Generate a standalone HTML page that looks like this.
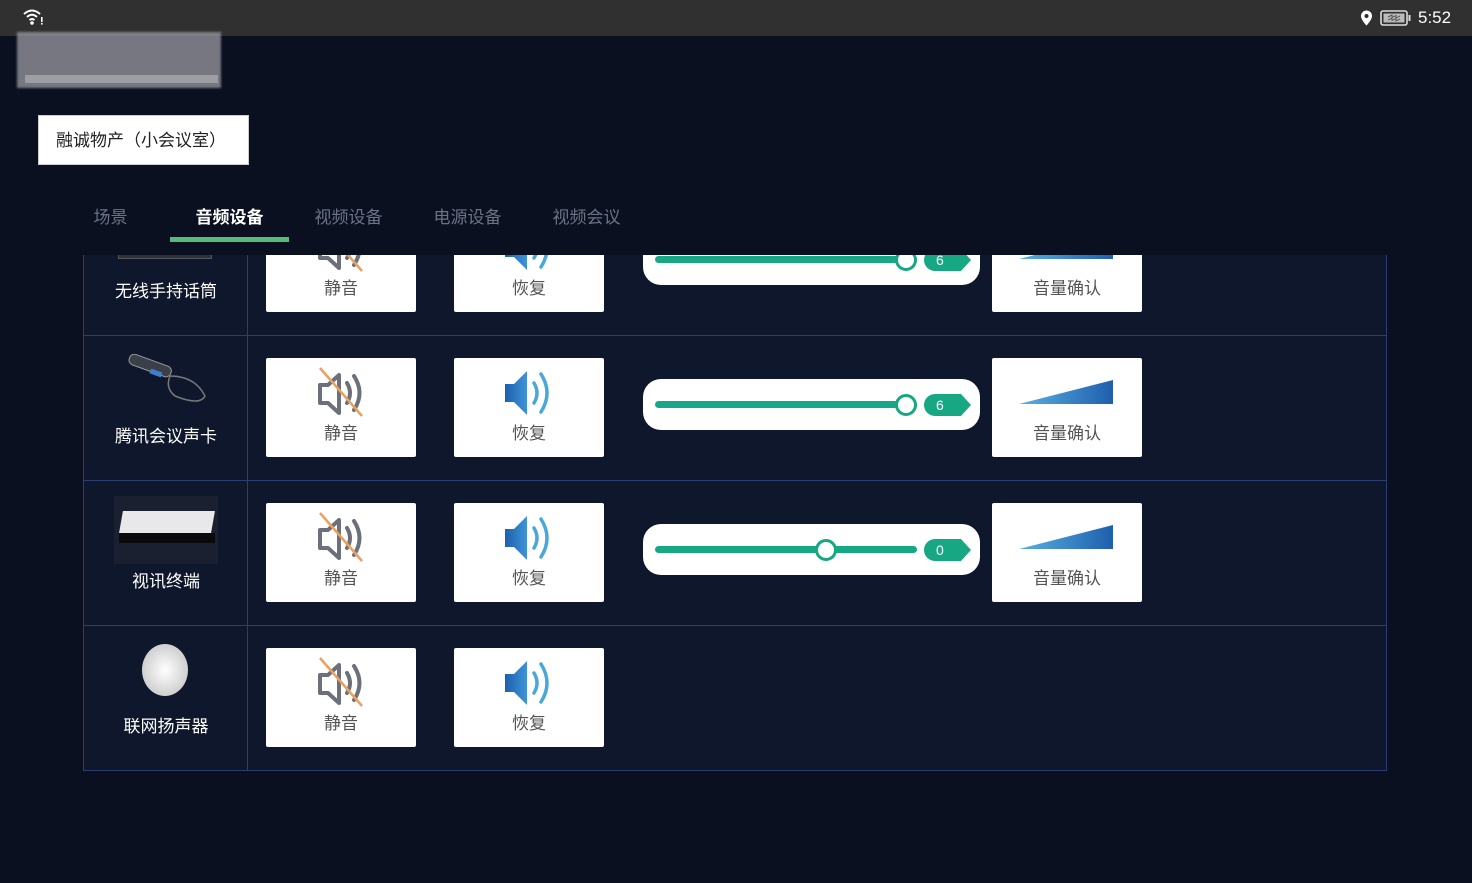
<!DOCTYPE html>
<html><head><meta charset="utf-8"><style>
*{margin:0;padding:0;box-sizing:border-box}
body{width:1472px;height:883px;overflow:hidden;background:#0a1020;font-family:"Liberation Sans","Noto Sans CJK SC",sans-serif;position:relative}
.abs{position:absolute}
#status{left:0;top:0;width:1472px;height:36px;background:#303030}
#clip{left:0;top:255px;width:1472px;height:628px;overflow:hidden}
#table{left:83px;top:-65px;width:1304px;height:581px;background:#0e172b;border:1px solid #2c3d72}
.row{position:absolute;left:0;width:1302px;height:145px;border-bottom:1px solid #2c3d72}
.name{position:absolute;left:0;top:0;width:164px;height:144px;border-right:1px solid #2c3d72}
.name span{position:absolute;left:0;width:164px;top:86px;text-align:center;color:#fff;font-size:17px}
.btn{position:absolute;top:22px;width:150px;height:99px;background:#fff;border-radius:2px}
.btn span{position:absolute;left:0;width:150px;top:61px;text-align:center;color:#555;font-size:17px}
.slider{position:absolute;left:559px;top:43px;width:337px;height:51px;background:#fff;border-radius:18px}
.tab{position:absolute;top:203px;width:119px;text-align:center;font-size:17px;color:#6b7385}
</style></head><body>
<div id="status" class="abs">
<svg class="abs" style="left:22px;top:8px" width="22" height="18" viewBox="0 0 22 18"><path d="M2 6 Q10 -1 18 6 M5 9 Q10 4.5 15 9 M7.5 12 Q10 10 12.5 12" stroke="#fff" stroke-width="2" fill="none"/><circle cx="10" cy="15" r="1.8" fill="#fff"/><rect x="19" y="9" width="1.6" height="5" fill="#fff"/><rect x="19" y="15" width="1.6" height="1.6" fill="#fff"/></svg>
<svg class="abs" style="left:1360px;top:10px" width="13" height="16" viewBox="0 0 13 16"><path d="M6.5 0.5 A5.5 5.5 0 0 1 12 6 C12 10 6.5 15.5 6.5 15.5 C6.5 15.5 1 10 1 6 A5.5 5.5 0 0 1 6.5 0.5z" fill="#fff"/><circle cx="6.5" cy="6" r="2" fill="#303030"/></svg>
<svg class="abs" style="left:1380px;top:10px" width="32" height="16" viewBox="0 0 32 16"><rect x="1" y="1" width="26" height="14" rx="2" stroke="#ddd" stroke-width="1.6" fill="none"/><rect x="3.5" y="3.5" width="21" height="9" fill="#bbb"/><path d="M8 7 l4 -2 v2.5 l4 -2 v2.5 l4 -2 M8 10 l4 -2 v2.5 l4 -2 v2.5 l4-2" stroke="#555" stroke-width="1" fill="none"/><rect x="28.5" y="5" width="2" height="6" fill="#ddd"/></svg>
<div class="abs" style="left:1418px;top:8px;color:#fff;font-size:17px">5:52</div>
</div>
<div class="abs" style="left:17px;top:32px;width:204px;height:56px;background:#9a9aa0;opacity:.75;filter:blur(1px)"></div>
<div class="abs" style="left:25px;top:75px;width:193px;height:8px;background:#c4c4c8;opacity:.5"></div>
<div class="abs" style="left:38px;top:115px;width:211px;height:50px;background:#fff;border:1px solid #ccc"></div>
<div class="abs" style="left:56px;top:126px;font-size:17px;color:#222">融诚物产（小会议室）</div>
<div class="tab" style="left:51px">场景</div>
<div class="tab" style="left:170px;color:#fff;font-weight:bold">音频设备</div>
<div class="tab" style="left:289px">视频设备</div>
<div class="tab" style="left:408px">电源设备</div>
<div class="tab" style="left:527px">视频会议</div>
<div class="abs" style="left:170px;top:237px;width:119px;height:5px;background:#5cb87a"></div>

<div id="clip" class="abs">
<div id="table" class="abs">

<div class="row" style="top:0">
<div class="name"><div class="abs" style="left:34px;top:60px;width:94px;height:8px;background:#2a3040;border:1px solid #555"></div><span>无线手持话筒</span></div>
<div class="btn" style="left:182px">MUTE<span>静音</span></div>
<div class="btn" style="left:370px">REST<span>恢复</span></div>
<div class="slider">SL6</div>
<div class="btn" style="left:908px">TRI<span>音量确认</span></div>
</div>
<div class="row" style="top:145px">
<div class="name"><svg class="abs" style="left:38px;top:18px" width="90" height="60" viewBox="0 0 90 60"><rect x="6" y="6" width="44" height="11" rx="5" transform="rotate(20 28 12)" fill="#3a3f4a" stroke="#999"/><rect x="30" y="14" width="12" height="5" fill="#3d7ecf" transform="rotate(20 28 12)"/><path d="M48 22 q25 0 35 20 q-5 10 -30 0 q-10 -8 -5 -20" stroke="#777" stroke-width="1.5" fill="none"/></svg><span>腾讯会议声卡</span></div>
<div class="btn" style="left:182px">MUTE<span>静音</span></div>
<div class="btn" style="left:370px">REST<span>恢复</span></div>
<div class="slider">SL6</div>
<div class="btn" style="left:908px">TRI<span>音量确认</span></div>
</div>
<div class="row" style="top:290px">
<div class="name"><div class="abs" style="left:30px;top:15px;width:104px;height:68px;background:#1a2030"></div><div class="abs" style="left:37px;top:30px;width:92px;height:22px;background:#e8e8ea;transform:skewX(-10deg)"></div><div class="abs" style="left:35px;top:52px;width:96px;height:10px;background:#0a0a0c"></div><span>视讯终端</span></div>
<div class="btn" style="left:182px">MUTE<span>静音</span></div>
<div class="btn" style="left:370px">REST<span>恢复</span></div>
<div class="slider">SL0</div>
<div class="btn" style="left:908px">TRI<span>音量确认</span></div>
</div>
<div class="row" style="top:435px;border-bottom:none">
<div class="name"><div class="abs" style="left:58px;top:18px;width:46px;height:52px;border-radius:50%;background:radial-gradient(#fff,#bbb)"></div><span>联网扬声器</span></div>
<div class="btn" style="left:182px">MUTE<span>静音</span></div>
<div class="btn" style="left:370px">REST<span>恢复</span></div>
</div>

</div>
</div>
<script>
const mute='<svg class="abs" style="left:0;top:0" width="150" height="70" viewBox="0 0 150 70"><path d="M54 27 h8 l11 -10 v38 l-11 -10 h-8 z" stroke="#6c707a" stroke-width="4" fill="none" stroke-linejoin="round"/><path d="M81 25 q6 10 0 20 M88 18 q11 17 0 34" stroke="#6c707a" stroke-width="4" fill="none" stroke-linecap="round"/><path d="M54 10 L96 58" stroke="#eba060" stroke-width="2.5"/></svg>';
const rest='<svg class="abs" style="left:0;top:0" width="150" height="70" viewBox="0 0 150 70"><defs><linearGradient id="g" x1="0" x2="1"><stop offset="0" stop-color="#1e5fae"/><stop offset="1" stop-color="#3d95d8"/></linearGradient></defs><path d="M51 26 h9 l13 -13 v44 l-13 -13 h-9 z" fill="url(#g)"/><path d="M80 25 q6 10 0 20 M87 16 q12 19 0 38" stroke="#4aa8d8" stroke-width="3.5" fill="none" stroke-linecap="round"/></svg>';
const tri='<svg class="abs" style="left:0;top:0" width="150" height="70" viewBox="0 0 150 70"><defs><linearGradient id="t" x1="0" x2="1"><stop offset="0" stop-color="#5ab0e0"/><stop offset="1" stop-color="#1f5fae"/></linearGradient></defs><path d="M27 46 L121 22 V46 Z" fill="url(#t)"/></svg>';
function sl(k){return '<div class="abs" style="left:12px;top:22px;width:262px;height:7px;border-radius:4px;background:#17a883"></div><div class="abs" style="left:'+(k-11)+'px;top:15px;width:22px;height:22px;border-radius:50%;background:#fff;border:3px solid #17a883"></div><svg class="abs" style="left:281px;top:14px" width="48" height="24" viewBox="0 0 48 24"><path d="M11 1 H37 L47 12 L37 23 H11 A11 11 0 0 1 11 1z" fill="#17a883"/><text x="12" y="17" fill="#fff" font-size="14" font-family="Liberation Sans">'+(k>200?'6':'0')+'</text></svg>';}
document.querySelectorAll('.btn').forEach(b=>{const t=b.firstChild.textContent;b.firstChild.remove();b.insertAdjacentHTML('afterbegin',t=='MUTE'?mute:t=='REST'?rest:tri);});
document.querySelectorAll('.slider').forEach(s=>{const t=s.textContent;s.innerHTML=sl(t=='SL6'?263:183);});
</script>
</body></html>
